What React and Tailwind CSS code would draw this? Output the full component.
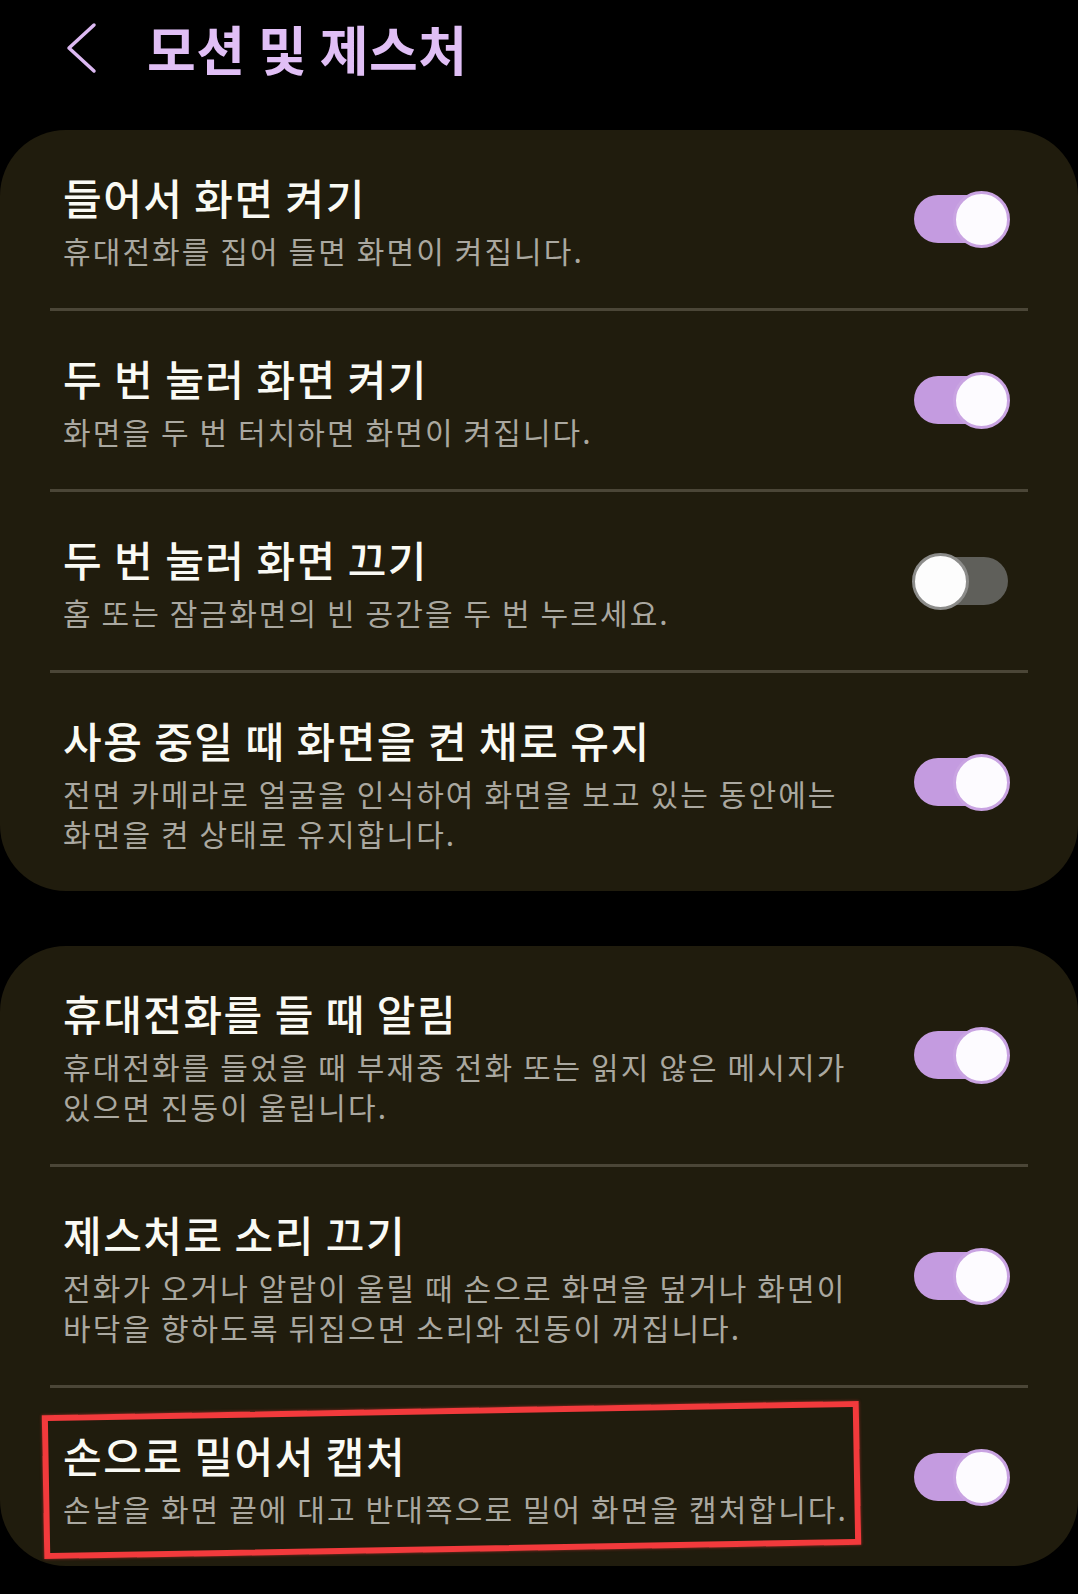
import React from "react";

const FONT = { fontFamily: '"Noto Sans CJK KR", "Noto Sans", sans-serif' };

function Toggle({ on }) {
  return (
    <div className="relative w-[96px] h-[57px] shrink-0">
      <div
        className={
          on
            ? "absolute left-0 right-[8px] top-[4px] h-[48px] rounded-full bg-[#c49be0]"
            : "absolute left-[6px] right-[2px] top-[4px] h-[48px] rounded-full bg-[#5f5f5a]"
        }
      />
      <div
        className={
          on
            ? "absolute right-0 top-0 w-[57px] h-[57px] rounded-full bg-[#fdfbff] border-[3px] border-[#c9a3e2]"
            : "absolute left-[-2px] top-0 w-[57px] h-[57px] rounded-full bg-[#fdfdfd] border-[3px] border-[#8c8c8a]"
        }
      />
    </div>
  );
}

function Row({ title, lines, on, children }) {
  return (
    <div className="relative flex items-center pl-[63px] pr-[68px] pt-[39px] pb-[38px]">
      <div className="flex-1 min-w-0">
        <div className="text-[42px] leading-[56px] tracking-[1.5px] font-medium text-[#fafaf4] whitespace-nowrap">
          {title}
        </div>
        <div className="mt-[5px] text-[30px] leading-[40px] tracking-[2.1px] text-[#aaa8a0] whitespace-nowrap">
          {lines.map((l, i) => (
            <div key={i}>{l}</div>
          ))}
        </div>
      </div>
      <Toggle on={on} />
      {children}
    </div>
  );
}

function Divider() {
  return <div className="mx-[50px] h-[3px] bg-[#4b4637]" />;
}

export default function App() {
  return (
    <div className="w-[1078px] min-h-[1594px] bg-black" style={FONT}>
      <div className="h-[96px] flex items-center">
        <svg
          className="ml-[66px] shrink-0"
          width="32"
          height="52"
          viewBox="0 0 32 52"
          fill="none"
        >
          <polyline
            points="28,3 3,26 28,49"
            stroke="#dcb9f2"
            strokeWidth="3.5"
            strokeLinecap="round"
            strokeLinejoin="round"
          />
        </svg>
        <div className="ml-[49px] text-[53px] leading-none font-bold text-[#e0bff5] tracking-[0.5px] whitespace-nowrap">
          모션 및 제스처
        </div>
      </div>

      <div className="mt-[34px] bg-[#201c0d] rounded-[66px]">
        <Row title="들어서 화면 켜기" lines={["휴대전화를 집어 들면 화면이 켜집니다."]} on />
        <Divider />
        <Row title="두 번 눌러 화면 켜기" lines={["화면을 두 번 터치하면 화면이 켜집니다."]} on />
        <Divider />
        <Row title="두 번 눌러 화면 끄기" lines={["홈 또는 잠금화면의 빈 공간을 두 번 누르세요."]} on={false} />
        <Divider />
        <Row
          title="사용 중일 때 화면을 켠 채로 유지"
          lines={["전면 카메라로 얼굴을 인식하여 화면을 보고 있는 동안에는", "화면을 켠 상태로 유지합니다."]}
          on
        />
      </div>

      <div className="mt-[55px] bg-[#201c0d] rounded-[66px]">
        <Row
          title="휴대전화를 들 때 알림"
          lines={["휴대전화를 들었을 때 부재중 전화 또는 읽지 않은 메시지가", "있으면 진동이 울립니다."]}
          on
        />
        <Divider />
        <Row
          title="제스처로 소리 끄기"
          lines={["전화가 오거나 알람이 울릴 때 손으로 화면을 덮거나 화면이", "바닥을 향하도록 뒤집으면 소리와 진동이 꺼집니다."]}
          on
        />
        <Divider />
        <Row title="손으로 밀어서 캡처" lines={["손날을 화면 끝에 대고 반대쪽으로 밀어 화면을 캡처합니다."]} on>
          <div className="pointer-events-none absolute left-[43px] top-[20px] w-[817px] h-[144px] border-[6px] border-[#f23a3c] -rotate-1 shadow-[0_0_3px_rgba(240,56,56,0.6)]" />
        </Row>
      </div>
    </div>
  );
}
